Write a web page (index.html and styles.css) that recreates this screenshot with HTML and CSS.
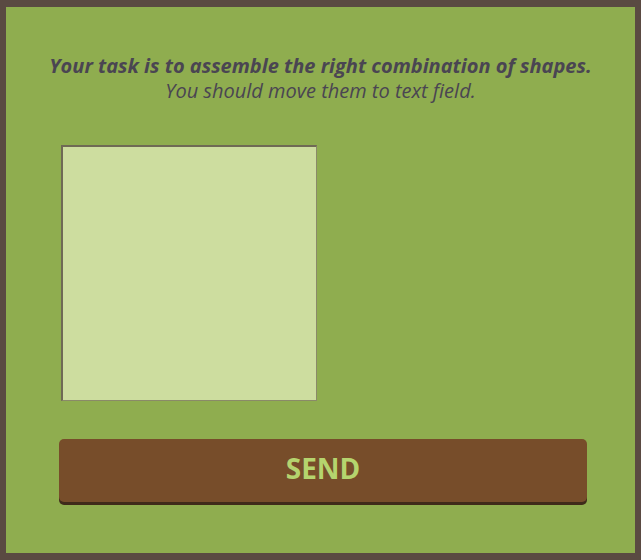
FILE: index.html
```html
<!DOCTYPE html>
<html>
<head>
<meta charset="utf-8">
<link rel="stylesheet" href="styles.css">
</head>
<body>
<div class="frame">
  <div class="intro">
    <p class="task">Your task is to assemble the right combination of shapes.</p>
    <p class="hint">You should move them to text field.</p>
  </div>
  <div class="field"></div>
  <button class="send">SEND</button>
</div>
</body>
</html>
```
FILE: styles.css
```css
html, body {
  margin: 0;
  padding: 0;
  background: #5a4a42;
}
.frame {
  box-sizing: border-box;
  width: 641px;
  height: 560px;
  border-style: solid;
  border-color: #5a4a42;
  border-width: 7px 6px 7px 6px;
  background: #8fad4f;
  font-family: "Open Sans", sans-serif;
  display: flex;
  flex-direction: column;
  padding-top: 46px;
}
.intro {
  text-align: center;
  color: #4a4552;
  font-size: 20px;
  line-height: 25px;
  font-style: italic;
}
.intro p {
  margin: 0;
}
.task {
  font-weight: 700;
}
.hint {
  font-weight: 400;
}
.field {
  box-sizing: border-box;
  margin: 42px 0 0 55px;
  width: 256px;
  height: 256px;
  background: #cddd9f;
  border-style: solid;
  border-width: 2px 1px 1px 2px;
  border-color: #6f6a55 #8a8a68 #8a8a68 #6f6a55;
}
.send {
  margin: 38px 0 0 53px;
  width: 528px;
  height: 63px;
  border: none;
  border-radius: 5px;
  background: #774d2a;
  box-shadow: 0 3px 0 #3f2a1a;
  color: #b5d46e;
  font-family: "Open Sans", sans-serif;
  font-weight: 700;
  font-size: 28px;
  padding: 0 0 5px 0;
  cursor: pointer;
}
```
